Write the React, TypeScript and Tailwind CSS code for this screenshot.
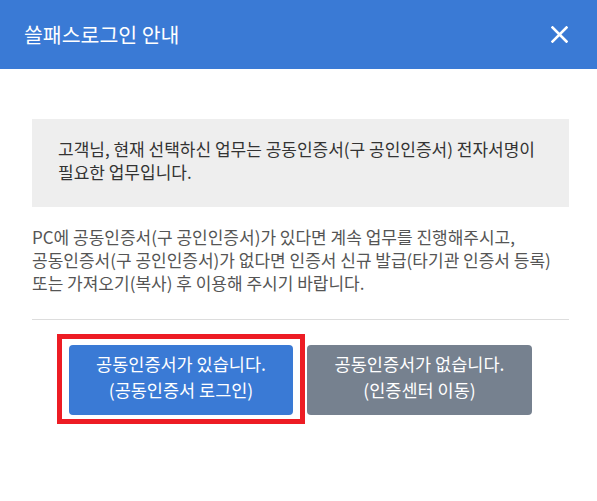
const font = { fontFamily: '"Noto Sans CJK KR", "Noto Sans", sans-serif' };

export default function App() {
  return (
    <div className="w-[597px] h-[501px] bg-white" style={font}>
      {/* 헤더 */}
      <div className="h-[69px] bg-[#3a7ad5] flex items-center justify-between pl-6 pr-[29px]">
        <h1 className="text-[20.5px] text-white leading-none">쓸패스로그인 안내</h1>
        <button className="text-white">
          <svg width="17" height="17" viewBox="0 0 17 17" stroke="currentColor" strokeWidth="2.6" strokeLinecap="square">
            <path d="M1.5 1.5 L15.5 15.5 M15.5 1.5 L1.5 15.5" />
          </svg>
        </button>
      </div>

      {/* 본문 */}
      <div className="pl-[32px] pr-[28px] pt-[50px]">
        <div className="bg-[#eeeeee] pl-[26px] pr-2 pt-[18px] pb-[24px] text-[17px] leading-[23px] text-[#333]">
          고객님, 현재 선택하신 업무는 공동인증서(구 공인인증서) 전자서명이
          <br />
          필요한 업무입니다.
        </div>

        <p className="mt-[18px] text-[17px] leading-[23px] text-[#555] whitespace-nowrap">
          PC에 공동인증서(구 공인인증서)가 있다면 계속 업무를 진행해주시고,
          <br />
          공동인증서(구 공인인증서)가 없다면 인증서 신규 발급(타기관 인증서 등록)
          <br />
          또는 가져오기(복사) 후 이용해 주시기 바랍니다.
        </p>

        <div className="mt-[25px] border-t border-[#dddddd]" />

        {/* 버튼 */}
        <div className="mt-[14px] ml-[25px] flex items-start gap-[2px]">
          <div className="border-[5px] border-[#ed1c24] pt-[6px] pb-[4px] px-[7px]">
            <button className="w-[224px] h-[70px] pb-[6px] rounded bg-[#3a7ad5] text-white text-[17.5px] leading-[26px]">
              공동인증서가 있습니다.
              <br />
              (공동인증서 로그인)
            </button>
          </div>
          <button className="mt-[11px] w-[225px] h-[70px] pb-[6px] rounded bg-[#76818f] text-white text-[17.5px] leading-[26px]">
            공동인증서가 없습니다.
            <br />
            (인증센터 이동)
          </button>
        </div>
      </div>
    </div>
  );
}
